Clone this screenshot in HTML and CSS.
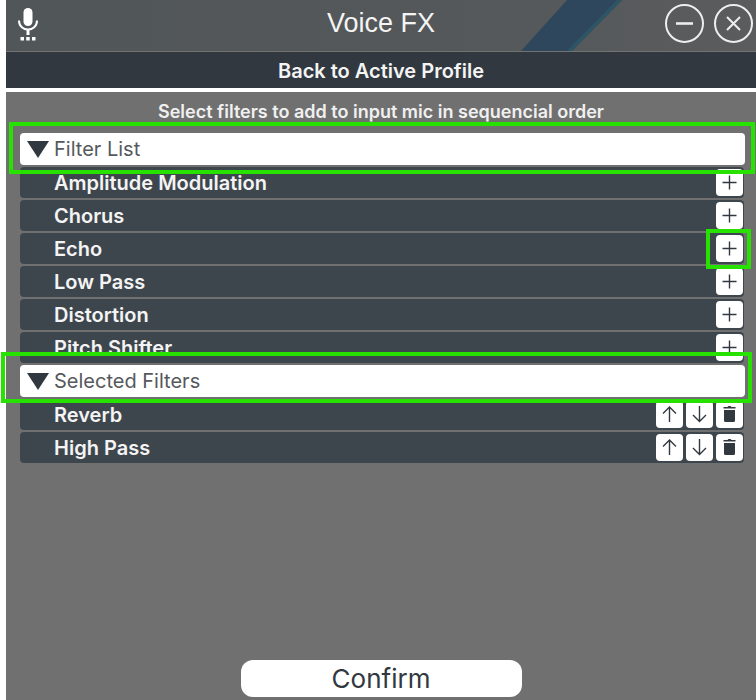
FILE: index.html
```html
<!DOCTYPE html>
<html lang="en">
<head>
  <meta charset="UTF-8">
  <meta name="viewport" content="width=device-width, initial-scale=1.0">
  <title>Voice FX</title>
  <link rel="stylesheet" href="styles.css">
</head>
<body>

  <!-- icons used more than once -->
  <svg class="sprite" aria-hidden="true">
    <symbol id="plus" viewBox="0 0 27 27"><path d="M13.5 6.500v14M6.500 13.5h14" fill="none" stroke="#313840" stroke-width="1.4"/></symbol>
    <symbol id="up" viewBox="0 0 27 27"><path d="M13.5 21V6M7 12.5L13.5 6l6.500 6.500" fill="none" stroke="#313840" stroke-width="1.4"/></symbol>
    <symbol id="down" viewBox="0 0 27 27"><path d="M13.500 5v15.500M7 14l6.500 6.500L20 14" fill="none" stroke="#313840" stroke-width="1.4"/></symbol>
    <symbol id="trash" viewBox="0 0 27 27"><path d="M7.500 6h4l1-1h2l1 1h4v1.500h-12zM8 9h11v10.500q0 1.500-1.500 1.500h-8q-1.500 0-1.500-1.500z" fill="#313840"/></symbol>
    <symbol id="arrow" viewBox="0 0 22 17"><path d="M0 0h22L11 17z" fill="#313840"/></symbol>
  </svg>

  <div class="window">
    <header class="titlebar">
      <svg class="stripe" width="102" height="51" viewBox="0 0 102 51" aria-hidden="true">
        <path d="M46 0h55L51 51H0z" fill="#2f475c"/>
        <path d="M96 0h5L51 51h-5z" fill="#2d5566"/>
      </svg>
      <svg class="mic" width="20" height="33" viewBox="0 0 20 33" role="img" aria-label="Microphone">
        <rect x="5.500" y="0" width="9" height="18" rx="4.500" fill="#fff"/>
        <path d="M1 12.500c0 12 18 12 18 0" fill="none" stroke="#fff" stroke-width="2"/>
        <path d="M10 21v6" stroke="#fff" stroke-width="3"/>
        <path d="M2.500 29h3.500v3.500H2.500zM8.200 29h3.500v3.500H8.200zM14 29h3.500v3.500H14z" fill="#fff"/>
      </svg>
      <h1>Voice FX</h1>
      <div class="window-buttons">
        <button type="button" aria-label="Minimize">
          <svg width="39" height="39" viewBox="0 0 39 39"><circle cx="19.500" cy="19.500" r="18.500"/><path d="M11 19.500h17" stroke-width="2.600"/></svg>
        </button>
        <button type="button" aria-label="Close">
          <svg width="39" height="39" viewBox="0 0 39 39"><circle cx="19.500" cy="19.500" r="18.500"/><path d="M13 13l13 13M26 13L13 26"/></svg>
        </button>
      </div>
    </header>

    <button type="button" class="back">Back to Active Profile</button>

    <main class="content">
      <p class="hint">Select filters to add to input mic in sequencial order</p>

      <div class="filters">
        <div class="section mark mark-list">
          <button type="button" class="section-header"><svg width="22" height="17"><use href="#arrow"/></svg>Filter List</button>
        </div>
        <div class="row"><span>Amplitude Modulation</span><button type="button" class="icon" aria-label="Add Amplitude Modulation"><svg><use href="#plus"/></svg></button></div>
        <div class="row"><span>Chorus</span><button type="button" class="icon" aria-label="Add Chorus"><svg><use href="#plus"/></svg></button></div>
        <div class="row"><span>Echo</span><div class="mark mark-add"><button type="button" class="icon" aria-label="Add Echo"><svg><use href="#plus"/></svg></button></div></div>
        <div class="row"><span>Low Pass</span><button type="button" class="icon" aria-label="Add Low Pass"><svg><use href="#plus"/></svg></button></div>
        <div class="row"><span>Distortion</span><button type="button" class="icon" aria-label="Add Distortion"><svg><use href="#plus"/></svg></button></div>
        <div class="row"><span>Pitch Shifter</span><button type="button" class="icon" aria-label="Add Pitch Shifter"><svg><use href="#plus"/></svg></button></div>

        <div class="section mark mark-selected">
          <button type="button" class="section-header"><svg width="22" height="17"><use href="#arrow"/></svg>Selected Filters</button>
        </div>
        <div class="row">
          <span>Reverb</span>
          <button type="button" class="icon" aria-label="Move Reverb up"><svg><use href="#up"/></svg></button>
          <button type="button" class="icon" aria-label="Move Reverb down"><svg><use href="#down"/></svg></button>
          <button type="button" class="icon" aria-label="Remove Reverb"><svg><use href="#trash"/></svg></button>
        </div>
        <div class="row">
          <span>High Pass</span>
          <button type="button" class="icon" aria-label="Move High Pass up"><svg><use href="#up"/></svg></button>
          <button type="button" class="icon" aria-label="Move High Pass down"><svg><use href="#down"/></svg></button>
          <button type="button" class="icon" aria-label="Remove High Pass"><svg><use href="#trash"/></svg></button>
        </div>
      </div>

      <button type="button" class="confirm">Confirm</button>
    </main>
  </div>

</body>
</html>
```
FILE: styles.css
```css
* {
  box-sizing: border-box;
}

body {
  margin: 0;
  background-color: white;
  font-family: Inter, "Liberation Sans", sans-serif;
}

button {
  padding: 0;
  border: none;
  font-family: inherit;
  cursor: pointer;
}

svg {
  display: block;
}

.sprite {
  position: absolute;
  width: 0;
  height: 0;
}

.window {
  display: flex;
  flex-direction: column;
  min-height: 100vh;
  margin-left: 6px;
}

/* title bar */
.titlebar {
  position: relative;
  display: grid;
  grid-template-columns: 1fr auto 1fr;
  align-items: center;
  height: 52px;
  padding: 0 3px 4px 12px;
  background: linear-gradient(to right, #515658, #54585a 60%, #5a5c5d);
  border-bottom: 1px solid #74726f;
}

.stripe {
  position: absolute;
  top: 0;
  right: 133px;
}

.mic {
  margin-top: 1px;
}

.titlebar h1 {
  margin: 0;
  padding-right: 9px;
  color: #f4f4f4;
  font-family: "Liberation Sans", Arial, sans-serif;
  font-size: 27px;
  font-weight: normal;
}

.window-buttons {
  display: flex;
  justify-content: flex-end;
  gap: 10px;
  position: relative;
}

.window-buttons button {
  background: none;
}

.window-buttons svg {
  fill: none;
  stroke: #eee;
  stroke-width: 2;
}

.back {
  height: 36px;
  padding-top: 2px;
  background-color: #313840;
  color: #f4f4f4;
  font-size: 20px;
  font-weight: 600;
}

/* content */
.content {
  display: flex;
  flex-direction: column;
  flex: 1;
  margin-top: 4px;
  padding: 8px 0 3px;
  background-color: #707070;
}

.hint {
  margin: 0 0 9px;
  color: #f0f0f0;
  font-size: 18px;
  font-weight: 600;
  line-height: 24px;
  text-align: center;
}

.filters {
  display: flex;
  flex-direction: column;
  gap: 2px;
  margin: 0 11px 16px 14px;
}

.section-header {
  display: flex;
  align-items: center;
  gap: 5px;
  width: 100%;
  height: 32px;
  padding-left: 7px;
  background-color: white;
  border-radius: 4px;
  color: #55595d;
  font-size: 20px;
}

.row {
  display: flex;
  align-items: center;
  gap: 3px;
  height: 31px;
  margin-right: 1px;
  padding: 0 1px 0 34px;
  background-color: #3e464d;
  border-radius: 4px;
  color: #f4f4f4;
  font-size: 20px;
  font-weight: 600;
}

.row span {
  flex: 1;
}

.icon {
  display: block;
  width: 27px;
  height: 27px;
  background-color: white;
  border-radius: 4px;
}

.icon svg {
  width: 27px;
  height: 27px;
}

/* green highlight boxes */
.mark {
  position: relative;
}

.mark::after {
  content: "";
  position: absolute;
  z-index: 1;
  border: 4px solid #27e100;
  pointer-events: none;
}

.mark-list::after {
  inset: -11px -10px -9px -11px;
}

.mark-add::after {
  inset: -6px -8px -7px -10px;
}

.mark-selected::after {
  inset: -13px -7px -6px -19px;
}

.confirm {
  align-self: center;
  width: 281px;
  max-width: 100%;
  height: 37px;
  margin-top: auto;
  background-color: white;
  border-radius: 12px;
  color: #313840;
  font-size: 26px;
}
```
